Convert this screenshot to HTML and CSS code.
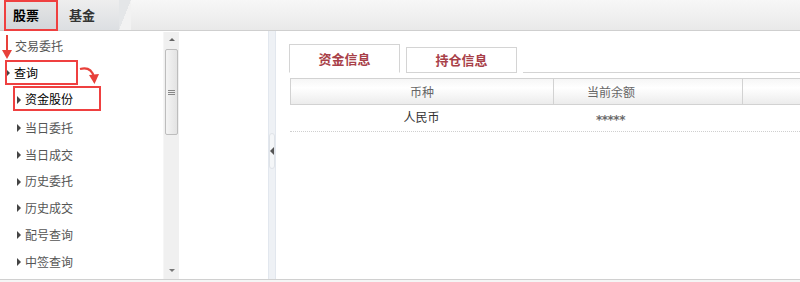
FILE: index.html
```html
<!DOCTYPE html>
<html>
<head>
<meta charset="utf-8">
<link rel="stylesheet" href="styles.css">
</head>
<body>
<div class="page">
  <div class="topbar">
    <div class="toptabs">
      <div class="toptab active">股票</div>
      <div class="toptab">基金</div>
      <div class="slant"></div>
    </div>
  </div>
  <div class="main">
    <div class="left">
      <ul class="menu">
        <li class="item top">交易委托</li>
        <li class="item top open"><span class="tri"></span>查询</li>
        <li class="item sub cur"><span class="tri"></span>资金股份</li>
        <li class="item sub"><span class="tri"></span>当日委托</li>
        <li class="item sub"><span class="tri"></span>当日成交</li>
        <li class="item sub"><span class="tri"></span>历史委托</li>
        <li class="item sub"><span class="tri"></span>历史成交</li>
        <li class="item sub"><span class="tri"></span>配号查询</li>
        <li class="item sub"><span class="tri"></span>中签查询</li>
      </ul>
      <div class="scrollbar">
        <div class="sb-btn up"><span class="arr-up"></span></div>
        <div class="sb-thumb"><span class="grip"></span></div>
        <div class="sb-track"></div>
        <div class="sb-btn down"><span class="arr-down"></span></div>
      </div>
    </div>
    <div class="gutter"></div>
    <div class="splitter"><span class="handle"><span class="arr-left"></span></span></div>
    <div class="content">
      <div class="tabs">
        <div class="tab active">资金信息</div>
        <div class="tab">持仓信息</div>
        <div class="tab-rest"></div>
      </div>
      <div class="table">
        <div class="thead">
          <div class="th c1">币种</div>
          <div class="th c2">当前余额</div>
          <div class="th c3"></div>
        </div>
        <div class="trow">
          <div class="td c1">人民币</div>
          <div class="td c2 stars">*****</div>
          <div class="td c3"></div>
        </div>
      </div>
    </div>
  </div>
  <div class="bottomline"></div>

  <div class="mark mark-top"></div>
  <div class="mark mark-query"></div>
  <div class="mark mark-fund"></div>
  <svg class="arrow arrow-down" width="12" height="26" viewBox="0 0 12 26">
    <line x1="6" y1="1" x2="6" y2="22" stroke="#e8403a" stroke-width="2"/>
    <path d="M1 16 L6 25 L11 16 Z" fill="#e8403a"/>
  </svg>
  <svg class="arrow arrow-curve" width="22" height="20" viewBox="0 0 22 20">
    <path d="M1 3 Q12 0 15 11" fill="none" stroke="#e8403a" stroke-width="2"/>
    <path d="M10 9 L15.5 18 L20 8 Z" fill="#e8403a"/>
  </svg>
</div>
</body>
</html>
```

FILE: styles.css
```css
* { box-sizing: border-box; }
html, body { margin: 0; padding: 0; background: #fff; }
body {
  font-family: "Noto Sans CJK SC", "Noto Sans", sans-serif;
  font-size: 12px;
  color: #555;
}
.page { position: relative; width: 800px; height: 282px; overflow: hidden; }

.topbar {
  height: 31px;
  background: linear-gradient(#f7f7f7, #e9e9e9);
  border-bottom: 1px solid #cfcfcf;
  display: flex;
}
.toptabs {
  display: flex;
  position: relative;
  height: 30px;
  padding-left: 4px;
  background: linear-gradient(#eeeeee, #dcdfe2);
}
.toptab {
  height: 30px;
  line-height: 30px;
  font-size: 13px;
  font-weight: bold;
  color: #333;
}
.toptab.active { width: 53px; padding: 0 0 0 9px; color: #000; background: linear-gradient(#e6e6e6, #d2d6da); }
.toptab:not(.active) { width: 62px; padding-left: 12px; }
.slant {
  width: 12px;
  height: 30px;
  background: linear-gradient(to bottom right, #e4e6e8 50%, #f2f2f2 50%);
}

.main { display: flex; height: 248px; }
.left { display: flex; width: 180px; }
.menu {
  list-style: none;
  margin: 0;
  padding: 2px 0 0 0;
  width: 163px;
}
.item {
  height: 26.7px;
  line-height: 26.7px;
  white-space: nowrap;
  display: flex;
  align-items: center;
}
.item.top { padding-left: 8px; color: #555; }
.item.top.open { color: #000; }
.item.sub { padding-left: 17px; }
.item.sub.cur { color: #000; margin-bottom: 2px; }
.tri {
  display: inline-block;
  width: 0; height: 0;
  border-top: 4px solid transparent;
  border-bottom: 4px solid transparent;
  border-left: 4px solid #444;
  margin-right: 4px;
}
.item.top .tri { margin-left: -2px; }
.item.top:first-child { padding-left: 15px; }

.scrollbar {
  width: 16px;
  margin-top: 1px;
  display: flex;
  flex-direction: column;
  background: #f0f0f0;
  border-left: 1px solid #f6f6f6;
}
.sb-btn { height: 15px; display: flex; align-items: center; justify-content: center; background: #f0f0f0; }
.arr-up { width: 0; height: 0; border-left: 3px solid transparent; border-right: 3px solid transparent; border-bottom: 3px solid #666; }
.arr-down { width: 0; height: 0; border-left: 3px solid transparent; border-right: 3px solid transparent; border-top: 3px solid #777; }
.sb-thumb {
  height: 86px;
  margin: 2px 1px 0 1px;
  border: 1px solid #bdbdbd;
  border-radius: 2px;
  background: linear-gradient(to right, #f4f4f4, #e3e3e3);
  display: flex; align-items: center; justify-content: center;
}
.grip { width: 7px; height: 5px; border-top: 1px solid #888; border-bottom: 1px solid #888; position: relative; }
.grip::after { content: ""; position: absolute; left: 0; right: 0; top: 1px; border-top: 1px solid #888; }
.sb-track { flex: 1; }
.sb-btn.down { height: 14px; align-items: flex-start; padding-top: 4px; }

.gutter { width: 88px; }
.splitter {
  width: 8px;
  background: #eef1f5;
  border-left: 1px solid #e2e7ee;
  border-right: 1px solid #e2e7ee;
  display: flex; align-items: center; justify-content: center;
  padding-bottom: 8px;
}
.handle {
  width: 6px; height: 36px;
  border: 1px solid #dfe3e8;
  border-radius: 3px;
  background: #f4f6f8;
  display: flex; align-items: center; justify-content: center;
}
.arr-left { width: 0; height: 0; border-top: 4px solid transparent; border-bottom: 4px solid transparent; border-right: 4px solid #555; }

.content { flex: 1; padding: 13px 0 0 13px; }
.tabs { display: flex; align-items: flex-end; height: 29px; }
.tab {
  height: 26px;
  width: 111px;
  border: 1px solid #d4d4d4;
  text-align: center;
  line-height: 23px;
  font-size: 13px;
  font-weight: bold;
  color: #a84048;
  background: #fff;
  margin-right: 6px;
}
.tab.active { height: 29px; border-bottom-color: #fff; line-height: 27px; }
.tab-rest { flex: 1; height: 1px; background: #d4d4d4; }

.table { margin-top: 5px; margin-left: 1px; }
.thead {
  display: flex;
  height: 27px;
  border: 1px solid #d2d2d2;
  border-right: none;
  background: linear-gradient(#f6f6f6 0%, #ffffff 35%, #ececec 100%);
}
.th { line-height: 25px; text-align: center; color: #666; font-size: 12px; }
.c1 { width: 263px; }
.c2 { width: 189px; padding-right: 74px; }
.c3 { flex: 1; }
.thead .c1, .thead .c2 { border-right: 1px solid #d2d2d2; }
.trow {
  display: flex;
  height: 27px;
  border-bottom: 1px dotted #cfcfcf;
}
.td { line-height: 24px; text-align: center; color: #333; }
.td.stars { font-family: "DejaVu Sans", sans-serif; font-size: 12px; font-weight: bold; color: #6a6a6a; letter-spacing: -0.5px; line-height: 30px; }

.bottomline { height: 3px; border-top: 1px solid #d0d0d0; background: #f5f5f5; }

.mark { position: absolute; border: 2px solid #ef4040; }
.mark-top { left: 4px; top: 0; width: 54px; height: 31px; }
.mark-query { left: 5px; top: 60px; width: 73px; height: 25px; }
.mark-fund { left: 13px; top: 86px; width: 88px; height: 25px; }
.arrow { position: absolute; }
.arrow-down { left: 1px; top: 34px; }
.arrow-curve { left: 79px; top: 66px; }
```
